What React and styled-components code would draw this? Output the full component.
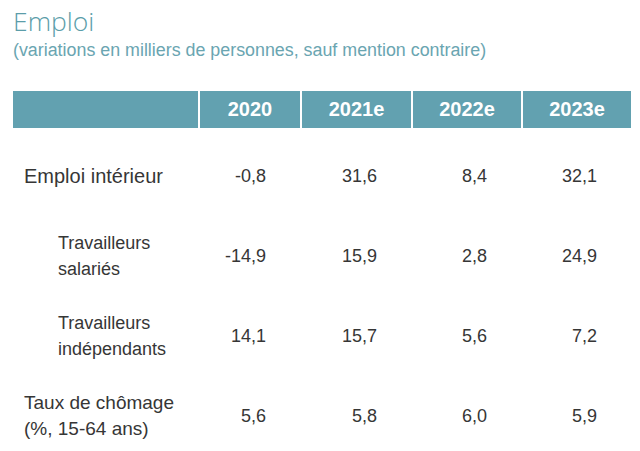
import React from "react";
import styled, { createGlobalStyle } from "styled-components";

const GlobalStyle = createGlobalStyle`
  html, body {
    margin: 0;
    padding: 0;
    background: #ffffff;
  }
  body {
    font-family: "Liberation Sans", Arial, sans-serif;
  }
`;

const columns = ["2020", "2021e", "2022e", "2023e"];

const rows = [
  { label: ["Emploi intérieur"], values: ["-0,8", "31,6", "8,4", "32,1"], size: 20 },
  { label: ["Travailleurs", "salariés"], values: ["-14,9", "15,9", "2,8", "24,9"], indent: true, size: 18 },
  { label: ["Travailleurs", "indépendants"], values: ["14,1", "15,7", "5,6", "7,2"], indent: true, size: 18 },
  { label: ["Taux de chômage", "(%, 15-64 ans)"], values: ["5,6", "5,8", "6,0", "5,9"], size: 19 },
];

function App() {
  return (
    <Page>
      <GlobalStyle />
      <Heading>
        <Title>Emploi</Title>
        <Subtitle>(variations en milliers de personnes, sauf mention contraire)</Subtitle>
      </Heading>
      <Table>
        <HeaderRow>
          <HeaderCell />
          {columns.map((c) => (
            <HeaderCell key={c}>{c}</HeaderCell>
          ))}
        </HeaderRow>
        {rows.map((row, i) => (
          <BodyRow key={i}>
            <Label indent={row.indent} size={row.size}>
              {row.label.map((l) => (
                <span key={l}>{l}</span>
              ))}
            </Label>
            {row.values.map((v, j) => (
              <Value key={j}>{v}</Value>
            ))}
          </BodyRow>
        ))}
      </Table>
    </Page>
  );
}

export default App;

const Page = styled.div`
  width: 640px;
  height: 451px;
  overflow: hidden;
  padding: 0 0 0 13px;
  box-sizing: border-box;
`;

const Heading = styled.div`
  display: flex;
  flex-direction: column;
  gap: 2px;
  padding-top: 5px;
`;

const Title = styled.div`
  font-family: "Open Sans", sans-serif;
  font-weight: 300;
  font-size: 26.5px;
  line-height: 32px;
  color: #5b9da9;
`;

const Subtitle = styled.div`
  font-size: 17.85px;
  line-height: 22px;
  color: #6aa5b1;
`;

const Table = styled.div`
  margin-top: 30px;
  width: 618px;
`;

const grid = `
  display: grid;
  grid-template-columns: 185px 100px 109px 108px 108px;
  column-gap: 2px;
`;

const HeaderRow = styled.div`
  ${grid};
  height: 37px;
  margin-bottom: 8px;
`;

const HeaderCell = styled.div`
  background: #62a1b0;
  color: #ffffff;
  font-weight: bold;
  font-size: 20px;
  display: flex;
  align-items: center;
  justify-content: center;
`;

const BodyRow = styled.div`
  ${grid};
  height: 80px;
  align-items: center;
  color: #363636;
`;

const Label = styled.div`
  display: flex;
  flex-direction: column;
  padding-left: ${({ indent }) => (indent ? "45px" : "11px")};
  font-size: ${({ size }) => size}px;
  line-height: 26px;
`;

const Value = styled.div`
  text-align: right;
  padding-right: 34px;
  font-size: 18px;
`;
